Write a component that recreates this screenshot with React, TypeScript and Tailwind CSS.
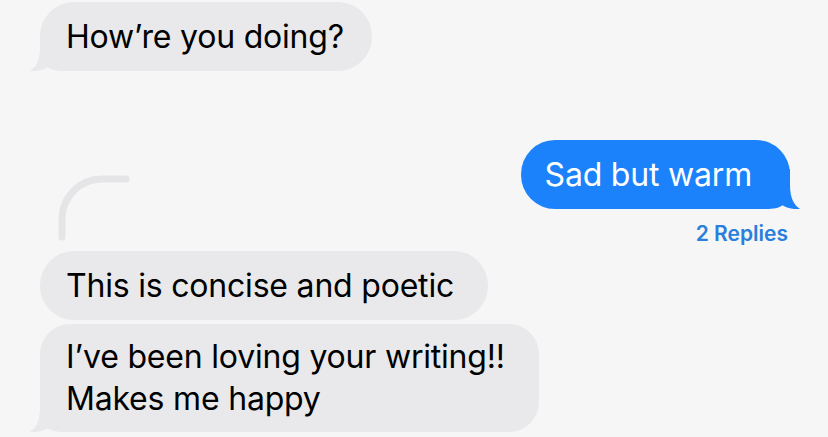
import React from "react";

const GRAY = "#e9e9eb";
const BLUE = "#1b82fb";

function LeftTail({ color }: { color: string }) {
  return (
    <svg
      className="absolute left-[-10px] bottom-0"
      width="44"
      height="40"
      viewBox="0 0 44 40"
    >
      <path
        d="M10 0 L10 16 C10 29 6 36 0 40 C6 40.6 13 39.2 17.5 36.2 C21 39 27 40 34 40 L44 40 L44 0 Z"
        fill={color}
      />
    </svg>
  );
}

function RightTail({ color }: { color: string }) {
  return (
    <svg
      className="absolute right-[-10px] bottom-0 scale-x-[-1]"
      width="44"
      height="40"
      viewBox="0 0 44 40"
    >
      <path
        d="M10 0 L10 16 C10 29 6 36 0 40 C6 40.6 13 39.2 17.5 36.2 C21 39 27 40 34 40 L44 40 L44 0 Z"
        fill={color}
      />
    </svg>
  );
}

export default function App() {
  return (
    <div className="w-[828px] h-[437px] overflow-hidden bg-[#f6f6f6] pt-[2px] font-['Inter',sans-serif] text-[32px] leading-[42px] tracking-[-0.2px] text-black">
      <div className="flex pl-[40px]">
        <div className="relative rounded-[34px] bg-[#e9e9eb] pl-[26px] pr-[28px] py-[13.5px]">
          <LeftTail color={GRAY} />
          <span className="relative">How’re you doing?</span>
        </div>
      </div>

      <div className="mt-[69px] flex items-end justify-between pl-[56px] pr-[38px]">
        <svg width="76" height="70" viewBox="0 0 76 70" className="mb-[4px]">
          <path
            d="M6 65 L6 47 A40 40 0 0 1 46 7 L70 7"
            fill="none"
            stroke="#e5e5e7"
            strokeWidth="7"
            strokeLinecap="round"
          />
        </svg>
        <div className="flex flex-col items-end">
          <div className="relative rounded-[34px] bg-[#1b82fb] pl-[24px] pr-[38px] py-[13.5px] text-white">
            <RightTail color={BLUE} />
            <span className="relative">Sad but warm</span>
          </div>
          <div className="mt-[13px] mr-[2px] text-[21px] leading-[24px] tracking-[0px] font-semibold text-[#2a7fdc]">
            2 Replies
          </div>
        </div>
      </div>

      <div className="mt-[5px] flex flex-col items-start gap-[4px] pl-[40px]">
        <div className="rounded-[34px] bg-[#e9e9eb] pl-[26px] pr-[34px] py-[13.5px]">
          This is concise and poetic
        </div>
        <div className="relative rounded-[30px] bg-[#e9e9eb] pl-[26px] pr-[34px] py-[12px]">
          <LeftTail color={GRAY} />
          <div className="relative">
            I’ve been loving your writing!!
            <br />
            Makes me happy
          </div>
        </div>
      </div>
    </div>
  );
}
